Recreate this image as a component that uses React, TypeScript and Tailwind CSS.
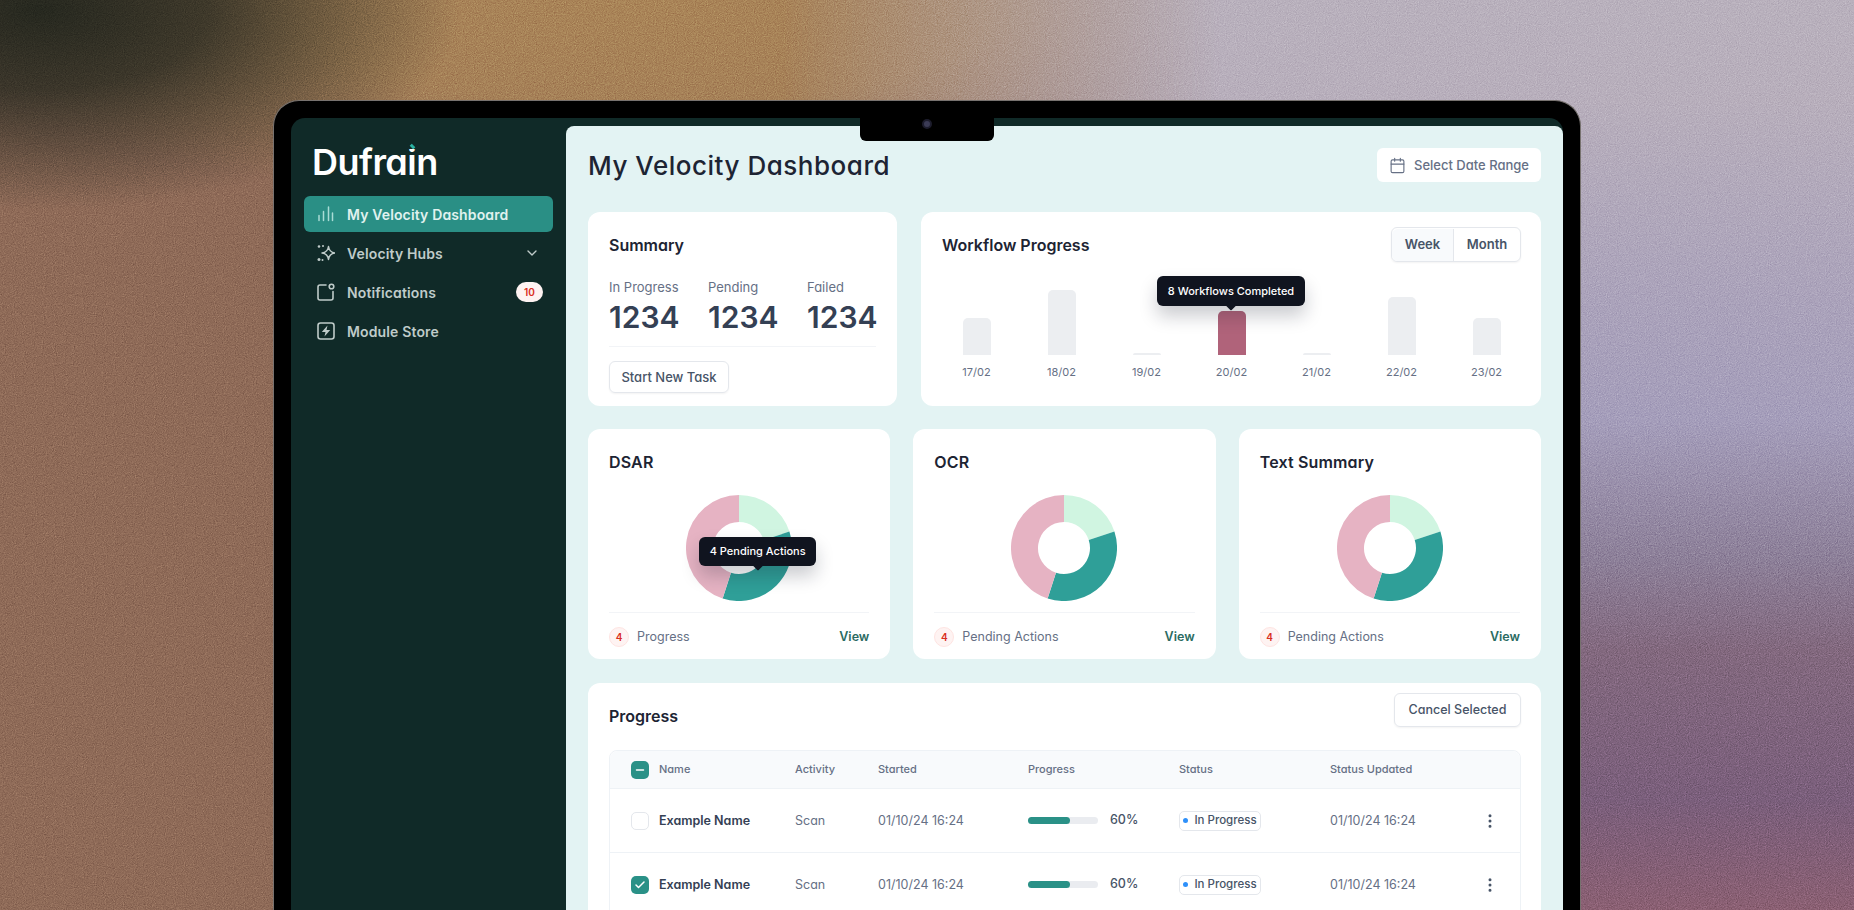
import { Calendar, Check, ChevronDown, EllipsisVertical, Minus } from "lucide-react"

const bars = [
  { label: "17/02", h: "h-[37px]", bg: "bg-[#eceef1]" },
  { label: "18/02", h: "h-[65px]", bg: "bg-[#eceef1]" },
  { label: "19/02", h: "h-[2px]", bg: "bg-[#eceef1]" },
  { label: "20/02", h: "h-[44px]", bg: "bg-[#b0637a]", tip: true },
  { label: "21/02", h: "h-[2px]", bg: "bg-[#eceef1]" },
  { label: "22/02", h: "h-[58px]", bg: "bg-[#eceef1]" },
  { label: "23/02", h: "h-[37px]", bg: "bg-[#eceef1]" },
]

const gridCols = "grid grid-cols-[28px_136px_83px_150px_151px_151px_151px_1fr] items-center pl-[21px]"

function Tip({ children, className }: { children: string; className: string }) {
  return (
    <div className={`absolute z-10 flex items-center justify-center whitespace-nowrap rounded-md bg-[#10141f] text-[11px] font-medium text-white shadow-[0_10px_18px_rgba(16,24,40,0.22)] ${className}`}>
      {children}
      <span className="absolute -bottom-[3px] left-1/2 h-2 w-2 -translate-x-1/2 rotate-45 rounded-[1px] bg-[#10141f]" />
    </div>
  )
}

function Donut() {
  return (
    <svg viewBox="0 0 106 106" className="h-[106px] w-[106px]">
      <path fill="#d0f5e1" d="M53 0A53 53 0 0 1 103.41 36.62L77.73 44.97A26 26 0 0 0 53 27Z" />
      <path fill="#2f9f98" d="M103.41 36.62A53 53 0 0 1 36.62 103.41L44.97 77.73A26 26 0 0 0 77.73 44.97Z" />
      <path fill="#e6b3c3" d="M36.62 103.41A53 53 0 0 1 53 0L53 27A26 26 0 0 0 44.97 77.73Z" />
    </svg>
  )
}

function DonutCard({ title, label, tip }: { title: string; label: string; tip?: boolean }) {
  return (
    <div className="h-[230px] rounded-xl bg-white px-[21px] pt-[21px]">
      <h3 className="text-[16px] leading-6 font-semibold tracking-[0.01em] text-[#1d2433]">{title}</h3>
      <div className="relative mx-auto mt-[21px] h-[106px] w-[106px]">
        <Donut />
        {tip && <Tip className="top-[42px] left-[13px] h-[29px] w-[117px]">4 Pending Actions</Tip>}
      </div>
      <div className="mt-[11px] border-t border-[#f2f4f7] pt-[14px]">
        <div className="flex h-5 items-center">
          <span className="flex h-5 w-5 items-center justify-center rounded-full border border-[#fee4e2] bg-[#fef3f2] text-[10px] font-semibold text-[#d92d20]">4</span>
          <span className="ml-2 text-[12.5px] text-[#667085]">{label}</span>
          <span className="ml-auto text-[12.5px] font-semibold text-[#2b6b62]">View</span>
        </div>
      </div>
    </div>
  )
}

function Row({ checked }: { checked?: boolean }) {
  return (
    <div className={`${gridCols} h-16 border-t border-[#eef2f6]`}>
      {checked ? (
        <span className="flex h-[18px] w-[18px] items-center justify-center rounded-[5px] bg-[#2a9187] text-white">
          <Check className="h-3 w-3" strokeWidth={3} />
        </span>
      ) : (
        <span className="h-[18px] w-[18px] rounded-[5px] border border-[#e4e7ec] bg-white" />
      )}
      <span className="pt-px text-[12.5px] font-semibold text-[#344054]">Example Name</span>
      <span className="pt-px text-[12.5px] text-[#667085]">Scan</span>
      <span className="pt-px text-[12.5px] text-[#667085]">01/10/24 16:24</span>
      <div className="flex items-center">
        <div className="h-[7px] w-[70px] rounded-full bg-[#eaecf0]">
          <div className="h-[7px] w-[42px] rounded-full bg-[#2a9187]" />
        </div>
        <span className="ml-3 text-[12.5px] font-medium text-[#475467]">60%</span>
      </div>
      <div className="flex">
        <span className="flex h-5 w-[82px] items-center justify-center gap-1.5 rounded-[5px] border border-[#e4e7ec] bg-white text-[11.5px] font-medium text-[#475467]">
          <span className="h-[5px] w-[5px] rounded-full bg-[#2e90fa]" />
          In Progress
        </span>
      </div>
      <span className="pt-px text-[12.5px] text-[#667085]">01/10/24 16:24</span>
      <EllipsisVertical className="h-[18px] w-[18px] text-[#475467]" />
    </div>
  )
}

function NavItem({ icon, label, right, active }: { icon: React.ReactNode; label: string; right?: React.ReactNode; active?: boolean }) {
  return (
    <div className={`flex h-9 items-center gap-3 rounded-md pr-[10px] pl-[13px] text-[14px] font-semibold tracking-[0.01em] ${active ? "bg-[#2a8f85] text-[#e0f2ef]" : "text-[#bfcbc9]"}`}>
      <span className="flex h-[18px] w-[18px] shrink-0 items-center justify-center">{icon}</span>
      <span>{label}</span>
      <span className="ml-auto">{right}</span>
    </div>
  )
}

export default function App() {
  return (
    <div className="relative h-[910px] w-[1854px] overflow-hidden bg-[#8f6b58] font-['Inter',sans-serif] [font-feature-settings:'cv11','ss03']">
      {/* blurred backdrop */}
      <div className="absolute inset-0 bg-[radial-gradient(ellipse_420px_200px_at_40px_10px,#26281f_0%,rgba(38,40,31,0.8)_40%,rgba(38,40,31,0)_100%),radial-gradient(ellipse_720px_210px_at_640px_0px,#aa8558_0%,rgba(170,133,88,0.85)_50%,rgba(170,133,88,0)_100%)]" />
      <div className="absolute inset-0 bg-[linear-gradient(180deg,#b9b1bd_0,#b8afbc_100px,#aba3bb_300px,#a59ebb_420px,#8d8099_560px,#83697f_650px,#7b5f7c_800px,#8b6073_910px)] [mask-image:linear-gradient(90deg,transparent_780px,black_1220px)]" />
      <svg className="absolute inset-0 h-full w-full opacity-[0.5] mix-blend-overlay">
        <filter id="grain" colorInterpolationFilters="sRGB">
          <feTurbulence type="fractalNoise" baseFrequency="0.9" numOctaves="2" stitchTiles="stitch" />
          <feColorMatrix type="matrix" values="0.33 0.33 0.33 0 0 0.33 0.33 0.33 0 0 0.33 0.33 0.33 0 0 0 0 0 0 1" />
        </filter>
        <rect width="100%" height="100%" filter="url(#grain)" />
      </svg>

      <div className="relative pt-[100px] pl-[273px]">
        <div className="relative h-[900px] w-[1308px] rounded-t-[26px] border border-b-0 border-[#77726f] bg-black px-[17px] pt-[17px]">
          {/* notch */}
          <div className="absolute top-0 left-[586px] z-20 flex h-[40px] w-[134px] items-center justify-center rounded-b-md bg-black pt-[5px]">
            <span className="h-[10px] w-[10px] rounded-full border-2 border-[#1c1c2c] bg-[#3b3b55]" />
          </div>

          <div className="flex h-full rounded-t-[14px] bg-[#102a28]">
            <aside className="w-[275px] shrink-0 px-[13px] pt-[25px]">
              <div className="pl-[8px] text-[36px] leading-[38px] font-semibold tracking-[-0.015em] text-white">
                Dufra
                <span className="relative">
                  i
                  <span className="absolute top-[1px] left-[2px] h-[8px] w-[7px] bg-[#102a28]" />
                  <span className="absolute top-[4px] left-[4px] h-[5px] w-[3px] -rotate-45 bg-[#2bb3a3]" />
                </span>
                n
              </div>
              <nav className="mt-[15px] flex flex-col gap-[3px]">
                <NavItem
                  active
                  label="My Velocity Dashboard"
                  icon={
                    <svg viewBox="0 0 18 18" className="h-[18px] w-[18px] text-[#a9dcd5]" fill="none" stroke="currentColor" strokeWidth="1.5" strokeLinecap="round">
                      <path d="M2 10.500v5M6.500 6.500v9M11.500 2v13.500M15.500 8v7.500" />
                    </svg>
                  }
                />
                <NavItem
                  label="Velocity Hubs"
                  right={<ChevronDown className="mr-[3px] h-4 w-4" />}
                  icon={
                    <svg viewBox="0 0 18 18" className="h-[18px] w-[18px]" fill="none" stroke="currentColor" strokeWidth="1.5" strokeLinejoin="round">
                      <path d="M11.500 2.500C12 6.500 14 8.500 18 9 14 9.500 12 11.500 11.500 15.500 11 11.500 9 9.500 5 9 9 8.500 11 6.500 11.500 2.500Z" />
                      <circle cx="2" cy="2.500" r="1.300" fill="currentColor" stroke="none" />
                      <circle cx="6" cy="2" r="1" fill="currentColor" stroke="none" />
                      <circle cx="2" cy="15.500" r="1.500" fill="currentColor" stroke="none" />
                      <circle cx="5.500" cy="16" r="1" fill="currentColor" stroke="none" />
                    </svg>
                  }
                />
                <NavItem
                  label="Notifications"
                  right={<span className="flex h-5 w-[27px] items-center justify-center rounded-full bg-[#fef3f2] text-[10px] font-semibold tracking-normal text-[#d92d20]">10</span>}
                  icon={
                    <svg viewBox="0 0 18 18" className="h-[18px] w-[18px]" fill="none" stroke="currentColor" strokeWidth="1.6" strokeLinecap="round">
                      <path d="M9 2H3A2 2 0 0 0 1 4v11a2 2 0 0 0 2 2h11a2 2 0 0 0 2-2V8.500" />
                      <circle cx="14.500" cy="3.500" r="2.300" />
                    </svg>
                  }
                />
                <NavItem
                  label="Module Store"
                  icon={
                    <svg viewBox="0 0 18 18" className="h-[18px] w-[18px]" fill="none" stroke="currentColor" strokeWidth="1.6" strokeLinejoin="round">
                      <rect x="1" y="1" width="16" height="16" rx="2.500" />
                      <path d="M10.500 3.500 4.800 10h3.700l-1 4.500L13.200 8H9.500z" fill="currentColor" stroke="none" />
                    </svg>
                  }
                />
              </nav>
            </aside>

            <main className="mt-2 min-w-0 flex-1 rounded-t-lg bg-[#e3f3f3] px-[22px] pt-[22px]">
              <header className="flex h-[34px] items-center justify-between">
                <h1 className="text-[26px] font-medium tracking-[0.02em] text-[#1d2433]">My Velocity Dashboard</h1>
                <button className="flex h-[34px] w-[164px] items-center justify-center gap-2 rounded-md bg-white pt-px text-[13px] font-medium text-[#667085]">
                  <Calendar className="h-[17px] w-[17px]" strokeWidth={1.6} />
                  Select Date Range
                </button>
              </header>

              <section className="mt-[30px] grid h-[194px] grid-cols-[309px_minmax(0,1fr)] gap-6">
                <div className="rounded-xl bg-white px-[21px] pt-[21px]">
                  <h3 className="text-[16px] leading-6 font-semibold text-[#1d2433]">Summary</h3>
                  <div className="mt-[21px] grid grid-cols-[99px_99px_1fr]">
                    {["In Progress", "Pending", "Failed"].map((s) => (
                      <div key={s}>
                        <div className="text-[13px] leading-[18px] text-[#667085]">{s}</div>
                        <div className="mt-[3px] text-[30px] leading-9 font-semibold text-[#344054]">1234</div>
                      </div>
                    ))}
                  </div>
                  <div className="mt-[11px] border-t border-[#f2f4f7]" />
                  <button className="mt-[14px] h-8 w-[120px] rounded-md border border-[#e4e7ec] pt-px text-[13px] font-medium text-[#475467] shadow-xs">Start New Task</button>
                </div>

                <div className="rounded-xl bg-white pt-[15px] pr-5 pl-[21px]">
                  <div className="flex h-[35px] items-center justify-between">
                    <h3 className="text-[16px] leading-6 font-semibold text-[#1d2433]">Workflow Progress</h3>
                    <div className="flex h-[35px] w-[130px] rounded-md border border-[#e4e7ec] pt-px text-[13px] font-semibold text-[#475467] shadow-xs">
                      <span className="flex w-[62px] items-center justify-center rounded-l-md border-r border-[#e4e7ec] bg-[#f8fafc]">Week</span>
                      <span className="flex flex-1 items-center justify-center">Month</span>
                    </div>
                  </div>
                  <div className="-ml-[8px] grid h-[93px] w-[595px] grid-cols-7 items-end">
                    {bars.map((b) => (
                      <div key={b.label} className="relative flex justify-center">
                        <div className={`w-[28px] rounded-t-[5px] ${b.h} ${b.bg}`} />
                        {b.tip && <Tip className="-top-[35px] left-[-32px] h-[30px] w-[148px]">8 Workflows Completed</Tip>}
                      </div>
                    ))}
                  </div>
                  <div className="-ml-[8px] mt-[9px] grid w-[595px] grid-cols-7 text-center text-[11px] leading-4 text-[#667085]">
                    {bars.map((b) => (
                      <span key={b.label}>{b.label}</span>
                    ))}
                  </div>
                </div>
              </section>

              <section className="mt-[23px] grid grid-cols-3 gap-[23px]">
                <DonutCard title="DSAR" label="Progress" tip />
                <DonutCard title="OCR" label="Pending Actions" />
                <DonutCard title="Text Summary" label="Pending Actions" />
              </section>

              <section className="mt-6 h-[300px] rounded-t-xl bg-white pt-[10px] pr-5 pl-[21px]">
                <div className="flex items-start justify-between">
                  <h3 className="mt-[11px] text-[16px] leading-6 font-semibold text-[#1d2433]">Progress</h3>
                  <button className="h-[34px] w-[127px] rounded-md border border-[#e4e7ec] pt-px text-[12.5px] font-medium text-[#475467] shadow-xs">Cancel Selected</button>
                </div>
                <div className="mt-[22px] rounded-t-lg border border-[#eef2f6]">
                  <div className={`${gridCols} h-[37px] rounded-t-lg bg-[#f8fafc] text-[11px] font-medium text-[#667085]`}>
                    <span className="flex h-[18px] w-[18px] items-center justify-center rounded-[5px] bg-[#2a9187] text-white">
                      <Minus className="h-3 w-3" strokeWidth={3} />
                    </span>
                    <span>Name</span>
                    <span>Activity</span>
                    <span>Started</span>
                    <span>Progress</span>
                    <span>Status</span>
                    <span>Status Updated</span>
                    <span />
                  </div>
                  <Row />
                  <Row checked />
                </div>
              </section>
            </main>
          </div>
        </div>
      </div>
    </div>
  )
}
